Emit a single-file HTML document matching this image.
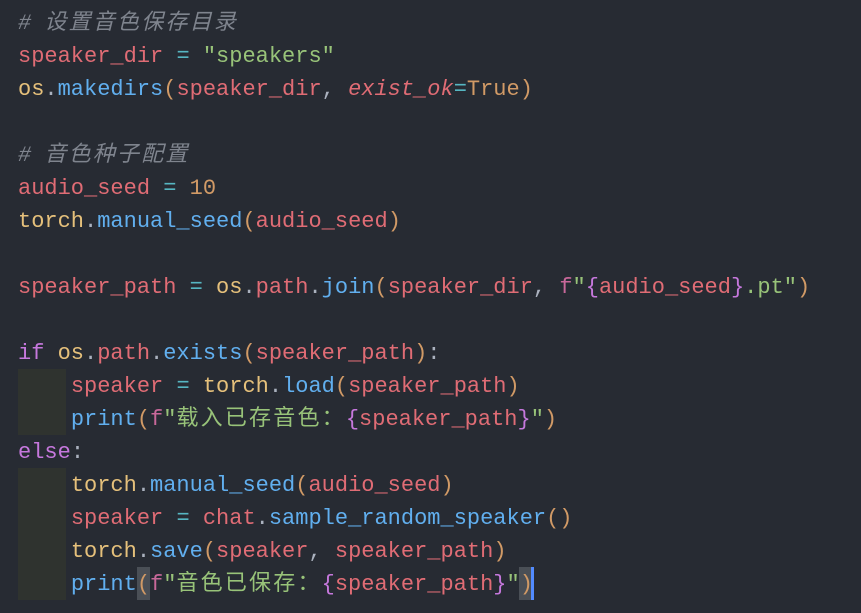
<!DOCTYPE html>
<html><head><meta charset="utf-8"><style>
html,body{margin:0;padding:0;background:#272b33;width:861px;height:613px;overflow:hidden}
.c{position:absolute;left:18px;top:7px;font-family:"Liberation Mono","Noto Sans CJK SC",monospace;font-size:22px;line-height:33px;color:#abb2bf;white-space:pre}
.k{font-family:"Noto Sans CJK SC",sans-serif;letter-spacing:2.2px;line-height:0}
.cm{color:#7f848e;font-style:italic}
.r{color:#e06c75}.g{color:#98c379}.y{color:#e5c07b}.b{color:#61afef}.p{color:#c678dd}.o{color:#d19a66}.cy{color:#56b6c2}.w{color:#abb2bf}.f{color:#c8689a}.pa{color:#d19a66}
.ind{position:absolute;left:18px;width:48px;background:#2f332f}
.hl{position:absolute;background:#4a4f56}
.cur{position:absolute;left:531px;top:567px;width:3px;height:33px;background:#528bff}
</style></head><body>
<div class="ind" style="top:369px;height:66px"></div>
<div class="ind" style="top:468px;height:132px"></div>
<div class="hl" style="left:137px;top:567px;width:13px;height:33px"></div>
<div class="hl" style="left:519px;top:567px;width:12px;height:33px"></div>
<div class="cur"></div>
<div class="c"><span class="cm"># <span class="k">设置音色保存目录</span></span>
<span class="r">speaker_dir</span> <span class="cy">=</span> <span class="g">"speakers"</span>
<span class="y">os</span>.<span class="b">makedirs</span><span class="pa">(</span><span class="r">speaker_dir</span>, <span class="r" style="font-style:italic">exist_ok</span><span class="cy">=</span><span class="o">True</span><span class="pa">)</span>

<span class="cm"># <span class="k">音色种子配置</span></span>
<span class="r">audio_seed</span> <span class="cy">=</span> <span class="o">10</span>
<span class="y">torch</span>.<span class="b">manual_seed</span><span class="pa">(</span><span class="r">audio_seed</span><span class="pa">)</span>

<span class="r">speaker_path</span> <span class="cy">=</span> <span class="y">os</span>.<span class="r">path</span>.<span class="b">join</span><span class="pa">(</span><span class="r">speaker_dir</span>, <span class="f">f</span><span class="g">"</span><span class="p">{</span><span class="r">audio_seed</span><span class="p">}</span><span class="g">.pt"</span><span class="pa">)</span>

<span class="p">if</span> <span class="y">os</span>.<span class="r">path</span>.<span class="b">exists</span><span class="pa">(</span><span class="r">speaker_path</span><span class="pa">)</span>:
    <span class="r">speaker</span> <span class="cy">=</span> <span class="y">torch</span>.<span class="b">load</span><span class="pa">(</span><span class="r">speaker_path</span><span class="pa">)</span>
    <span class="b">print</span><span class="pa">(</span><span class="f">f</span><span class="g">"<span class="k">载入已存音色：</span></span><span class="p">{</span><span class="r">speaker_path</span><span class="p">}</span><span class="g">"</span><span class="pa">)</span>
<span class="p">else</span>:
    <span class="y">torch</span>.<span class="b">manual_seed</span><span class="pa">(</span><span class="r">audio_seed</span><span class="pa">)</span>
    <span class="r">speaker</span> <span class="cy">=</span> <span class="r">chat</span>.<span class="b">sample_random_speaker</span><span class="pa">()</span>
    <span class="y">torch</span>.<span class="b">save</span><span class="pa">(</span><span class="r">speaker</span>, <span class="r">speaker_path</span><span class="pa">)</span>
    <span class="b">print</span><span class="pa">(</span><span class="f">f</span><span class="g">"<span class="k">音色已保存：</span></span><span class="p">{</span><span class="r">speaker_path</span><span class="p">}</span><span class="g">"</span><span class="pa">)</span></div>
</body></html>
